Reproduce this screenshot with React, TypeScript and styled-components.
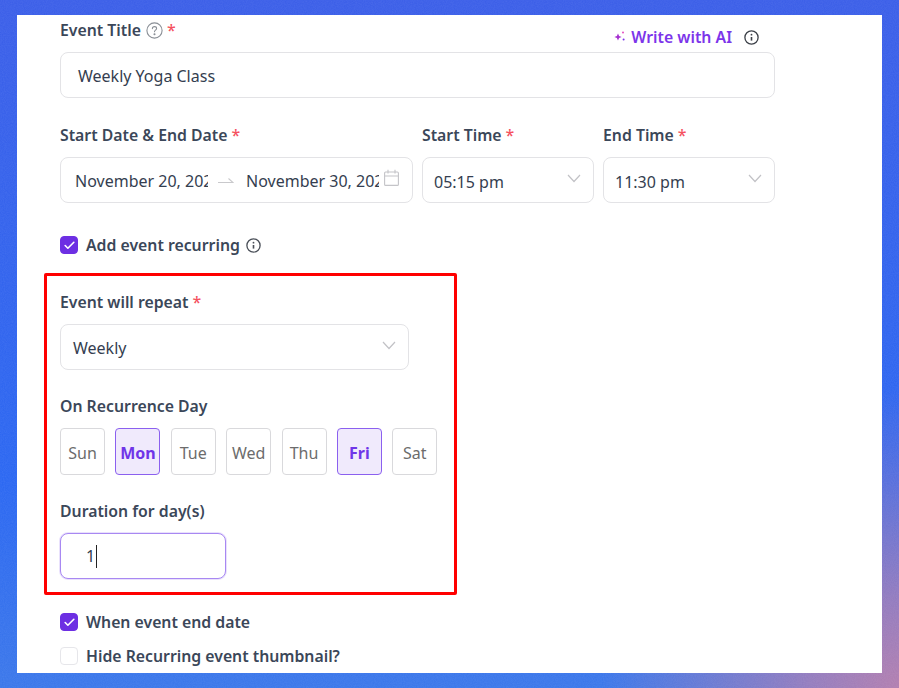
import React from "react";
import styled, { createGlobalStyle } from "styled-components";
import { Check } from "lucide-react";

const noise = `url("data:image/svg+xml,%3Csvg xmlns='http://www.w3.org/2000/svg' width='200' height='200'%3E%3Cfilter id='n'%3E%3CfeTurbulence type='fractalNoise' baseFrequency='.9' numOctaves='2'/%3E%3CfeColorMatrix values='0 0 0 0 1 0 0 0 0 1 0 0 0 0 1 0 0 0 .5 -.12'/%3E%3C/filter%3E%3Crect width='200' height='200' filter='url(%23n)' opacity='.18'/%3E%3C/svg%3E")`;

const Global = createGlobalStyle`
  html, body { margin: 0; padding: 0; }
  body { font-family: "Noto Sans", "Open Sans", Arial, sans-serif; overflow: hidden; }
  * { box-sizing: border-box; }
`;

const Backdrop = styled.div`
  width: 899px;
  height: 688px;
  padding: 15px 17px;
  background-image: ${noise},
    radial-gradient(circle at 100% 100%, #b27fb0 0, rgba(178,127,176,.75) 90px, rgba(90,120,220,0) 300px),
    linear-gradient(180deg, #3c5fe8 0%, #2c68f2 70%, #3c78ea 100%);
`;

const Panel = styled.main`
  width: 865px;
  height: 658px;
  background: #fff;
  padding: 4px 107px 0 43px;
  overflow: hidden;
  display: flex;
  flex-direction: column;
`;

const Label = styled.label`
  display: flex;
  align-items: center;
  height: 22px;
  margin-bottom: 11px;
  font-size: 15.8px;
  font-weight: 600;
  line-height: 22px;
  color: #3b4759;
  white-space: nowrap;
`;

const Required = styled.span`
  color: #f5525f;
  margin-left: 4px;
  font-weight: 500;
`;

const TitleHead = styled.div`
  display: flex;
  justify-content: space-between;
  height: 33px;
`;

const AiGroup = styled.div`
  display: flex;
  align-items: center;
  gap: 12px;
  height: 22px;
  margin-top: 7px;
  padding-right: 16px;
`;

const AiLink = styled.span`
  display: flex;
  align-items: center;
  gap: 5px;
  font-size: 15.8px;
  font-weight: 600;
  color: #7c35ea;
`;

const Control = styled.div<{ $h?: number; $focused?: boolean }>`
  display: flex;
  align-items: center;
  height: ${(p) => p.$h ?? 46}px;
  background: #fff;
  border: 1px solid ${(p) => (p.$focused ? "#a888f2" : "#e3e3e6")};
  border-radius: 8px;
  font-size: 16px;
  color: #343e50;
  box-shadow: ${(p) => (p.$focused ? "0 0 0 1px rgba(168,136,242,.25)" : "none")};
`;

const TitleInput = styled(Control)`
  padding: 2px 0 0 17px;
`;

const Row = styled.div`
  display: grid;
  grid-template-columns: 353px 172px 172px;
  gap: 9px;
  margin-top: 26px;
`;

const DateControl = styled(Control)`
  padding: 2px 13px 0 14px;
`;

const DateText = styled.span`
  width: 133px;
  overflow: hidden;
  white-space: nowrap;
  flex: none;
`;

const Harpoon = styled.svg`
  width: 16px;
  height: 12px;
  margin: 0 12px 0 10px;
  flex: none;
`;

const CalendarIcon = styled.svg`
  width: 15px;
  height: 18px;
  margin-left: auto;
  margin-top: -6px;
  flex: none;
`;

const SelectControl = styled(Control)`
  justify-content: space-between;
  padding: 0 12px 0 11px;
`;

const SelectValue = styled.span<{ $drop?: number }>`
  padding-top: ${(p) => p.$drop ?? 3}px;
`;

const Chevron = styled.svg`
  width: 14px;
  height: 9px;
  margin-top: -4px;
  flex: none;
`;

const CheckRow = styled.div<{ $top: number }>`
  display: flex;
  align-items: center;
  gap: 8px;
  height: 22px;
  margin-top: ${(p) => p.$top}px;
  font-size: 15.8px;
  font-weight: 600;
  color: #3b4759;
  white-space: nowrap;
`;

const Box = styled.span<{ $on?: boolean }>`
  width: 18px;
  height: 18px;
  border-radius: 4px;
  display: flex;
  align-items: center;
  justify-content: center;
  flex: none;
  background: ${(p) => (p.$on ? "#6d2fe3" : "#fff")};
  border: 1px solid ${(p) => (p.$on ? "#6d2fe3" : "#e6e6ea")};
  color: #fff;
`;

const Highlight = styled.section`
  width: 413px;
  height: 322px;
  margin: 17px 0 0 -16px;
  padding: 15px 0 0 13px;
  border: 3px solid #ff0000;
  border-radius: 2px;
`;

const RepeatSelect = styled(SelectControl)`
  width: 349px;
  padding-left: 12px;
`;

const Group = styled.div`
  margin-top: 25px;
`;

const Days = styled.div`
  display: flex;
  gap: 10.4px;
`;

const Day = styled.span<{ $on?: boolean }>`
  width: 45px;
  height: 47px;
  padding-top: 2px;
  display: flex;
  align-items: center;
  justify-content: center;
  border-radius: 4px;
  font-size: 16px;
  font-weight: ${(p) => (p.$on ? 700 : 400)};
  color: ${(p) => (p.$on ? "#6f35e8" : "#6c6c6c")};
  background: ${(p) => (p.$on ? "#f0eafc" : "#fff")};
  border: 1px solid ${(p) => (p.$on ? "#8b60ef" : "#d9d9dc")};
`;

const DurationInput = styled(Control)`
  width: 166px;
  padding-left: 25px;
  margin-top: 1px;
`;

const Caret = styled.span`
  display: inline-block;
  width: 1px;
  height: 23px;
  margin-left: 1px;
  background: #222;
`;

const HintIcon = styled.span`
  display: flex;
  margin-left: -2px;
`;

const QuestionIcon = () => (
  <svg width="17" height="17" viewBox="0 0 17 17" fill="none" stroke="#8a8f96" strokeWidth="1.1" style={{ marginLeft: 5 }}>
    <circle cx="8.5" cy="8.5" r="7.6" />
    <path d="M6.4 6.6c0-1.2 1-2 2.1-2s2.1.8 2.1 1.9c0 1.6-2.1 1.6-2.1 3.2" strokeLinecap="round" />
    <circle cx="8.5" cy="12.2" r=".5" fill="#8a8f96" />
  </svg>
);

const InfoIcon = ({ color = "#4a4f58" }: { color?: string }) => (
  <svg width="15" height="15" viewBox="0 0 15 15" fill="none" stroke={color} strokeWidth="1.3">
    <circle cx="7.5" cy="7.5" r="6.6" />
    <path d="M7.5 7v3.6" strokeWidth="1.6" />
    <circle cx="7.5" cy="4.7" r=".9" fill={color} stroke="none" />
  </svg>
);

const Sparkle = () => (
  <svg width="12" height="14" viewBox="0 0 12 14">
    <path d="M4 3.5 5.1 6 7.6 7 5.1 8 4 10.5 2.9 8 .4 7l2.5-1z" fill="#a52fd0" />
    <circle cx="9" cy="2.6" r="1" fill="#e54cc0" />
    <circle cx="9.6" cy="9.6" r="1" fill="#7c35ea" />
  </svg>
);

const ChevronDown = () => (
  <Chevron viewBox="0 0 14 9" fill="none" stroke="#c2c2c6" strokeWidth="1.2">
    <path d="M1 1l6 6.5L13 1" />
  </Chevron>
);

const Tick = () => <Check size={13} strokeWidth={3} />;

const days = [
  { name: "Sun" },
  { name: "Mon", on: true },
  { name: "Tue" },
  { name: "Wed" },
  { name: "Thu" },
  { name: "Fri", on: true },
  { name: "Sat" },
];

export default function App() {
  return (
    <>
      <Global />
      <Backdrop>
        <Panel>
          <TitleHead>
            <Label>
              Event Title
              <QuestionIcon />
              <Required>*</Required>
            </Label>
            <AiGroup>
              <AiLink>
                <Sparkle />
                Write with AI
              </AiLink>
              <InfoIcon color="#3c4048" />
            </AiGroup>
          </TitleHead>
          <TitleInput>Weekly Yoga Class</TitleInput>

          <Row>
            <div>
              <Label>
                Start Date &amp; End Date<Required>*</Required>
              </Label>
              <DateControl>
                <DateText>November 20, 2024</DateText>
                <Harpoon viewBox="0 0 16 12" fill="none" stroke="#c9c9cc" strokeWidth="1.1">
                  <path d="M0 7.5h15L10.5 3.5" />
                </Harpoon>
                <DateText>November 30, 2024</DateText>
                <CalendarIcon viewBox="0 0 15 18" fill="none" stroke="#c4c4c8" strokeWidth="1.1">
                  <rect x=".6" y="3" width="13.8" height="13.4" rx="1" />
                  <path d="M.6 7h13.8M4 .8v3.6M11 .8v3.6" />
                </CalendarIcon>
              </DateControl>
            </div>
            <div>
              <Label>
                Start Time<Required>*</Required>
              </Label>
              <SelectControl>
                <SelectValue>05:15 pm</SelectValue>
                <ChevronDown />
              </SelectControl>
            </div>
            <div>
              <Label>
                End Time<Required>*</Required>
              </Label>
              <SelectControl>
                <SelectValue>11:30 pm</SelectValue>
                <ChevronDown />
              </SelectControl>
            </div>
          </Row>

          <CheckRow $top={31}>
            <Box $on>
              <Tick />
            </Box>
            Add event recurring
            <HintIcon>
              <InfoIcon />
            </HintIcon>
          </CheckRow>

          <Highlight>
            <Label>
              Event will repeat<Required>*</Required>
            </Label>
            <RepeatSelect>
              <SelectValue $drop={2}>Weekly</SelectValue>
              <ChevronDown />
            </RepeatSelect>
            <Group>
              <Label>On Recurrence Day</Label>
              <Days>
                {days.map((d) => (
                  <Day key={d.name} $on={d.on}>
                    {d.name}
                  </Day>
                ))}
              </Days>
            </Group>
            <Group>
              <Label>Duration for day(s)</Label>
              <DurationInput $focused>
                1<Caret />
              </DurationInput>
            </Group>
          </Highlight>

          <CheckRow $top={16}>
            <Box $on>
              <Tick />
            </Box>
            When event end date
          </CheckRow>
          <CheckRow $top={12}>
            <Box />
            Hide Recurring event thumbnail?
          </CheckRow>
        </Panel>
      </Backdrop>
    </>
  );
}
